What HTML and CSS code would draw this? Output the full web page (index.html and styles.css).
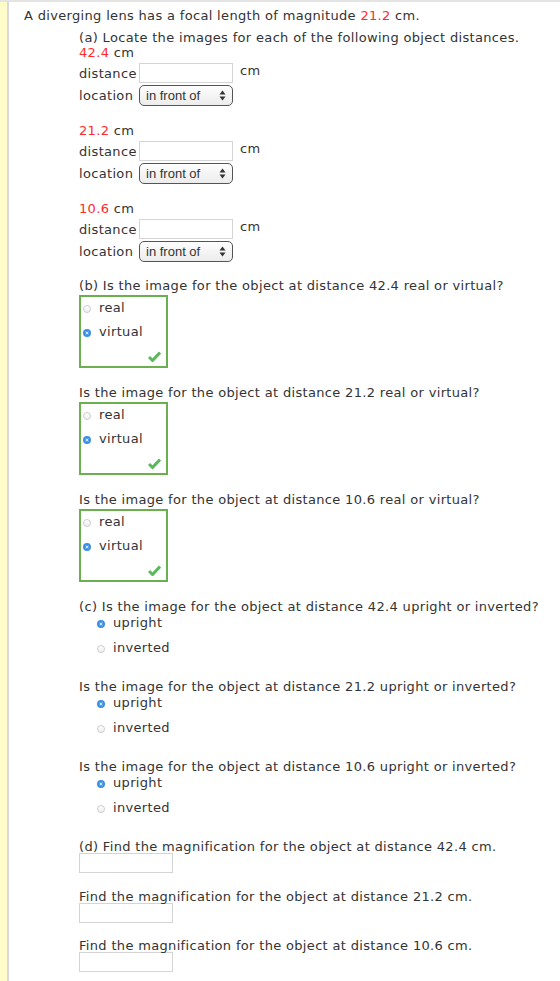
FILE: index.html
```html
<!DOCTYPE html>
<html lang="en">
<head>
  <meta charset="UTF-8">
  <meta name="viewport" content="width=device-width, initial-scale=1.0">
  <title>Diverging Lens</title>
  <link rel="stylesheet" href="styles.css">
</head>
<body>
  <div class="sidebar"></div>
  <div class="page">
    <p class="intro">A diverging lens has a focal length of magnitude <span class="red">21.2</span> cm.</p>

    <div class="part">
      <p class="q">(a) Locate the images for each of the following object distances.</p>

      <div class="obj">
        <p class="obj-label"><span class="red">42.4</span> cm</p>
        <div class="row first"><span class="lbl">distance</span><input class="num" type="text"><span class="unit">cm</span></div>
        <div class="row"><span class="lbl">location</span><span class="select">in front of<svg width="7" height="11" viewBox="0 0 7 11"><path d="M3.5 0.5 L6.5 4.5 H0.5 Z M3.5 10.5 L6.5 6.5 H0.5 Z" fill="#333"/></svg></span></div>
      </div>

      <div class="obj">
        <p class="obj-label"><span class="red">21.2</span> cm</p>
        <div class="row first"><span class="lbl">distance</span><input class="num" type="text"><span class="unit">cm</span></div>
        <div class="row"><span class="lbl">location</span><span class="select">in front of<svg width="7" height="11" viewBox="0 0 7 11"><path d="M3.5 0.5 L6.5 4.5 H0.5 Z M3.5 10.5 L6.5 6.5 H0.5 Z" fill="#333"/></svg></span></div>
      </div>

      <div class="obj">
        <p class="obj-label"><span class="red">10.6</span> cm</p>
        <div class="row first"><span class="lbl">distance</span><input class="num" type="text"><span class="unit">cm</span></div>
        <div class="row"><span class="lbl">location</span><span class="select">in front of<svg width="7" height="11" viewBox="0 0 7 11"><path d="M3.5 0.5 L6.5 4.5 H0.5 Z M3.5 10.5 L6.5 6.5 H0.5 Z" fill="#333"/></svg></span></div>
      </div>
    </div>

    <div class="part part-b">
      <p class="q">(b) Is the image for the object at distance 42.4 real or virtual?</p>
      <div class="answer">
        <div class="opt"><span class="radio"></span>real</div>
        <div class="opt"><span class="radio on"></span>virtual</div>
        <svg class="check" width="13" height="11" viewBox="0 0 13 11"><path d="M1 6 L4.5 9.5 L12 1.5" fill="none" stroke="#5cb85c" stroke-width="3"/></svg>
      </div>

      <p class="q">Is the image for the object at distance 21.2 real or virtual?</p>
      <div class="answer">
        <div class="opt"><span class="radio"></span>real</div>
        <div class="opt"><span class="radio on"></span>virtual</div>
        <svg class="check" width="13" height="11" viewBox="0 0 13 11"><path d="M1 6 L4.5 9.5 L12 1.5" fill="none" stroke="#5cb85c" stroke-width="3"/></svg>
      </div>

      <p class="q">Is the image for the object at distance 10.6 real or virtual?</p>
      <div class="answer">
        <div class="opt"><span class="radio"></span>real</div>
        <div class="opt"><span class="radio on"></span>virtual</div>
        <svg class="check" width="13" height="11" viewBox="0 0 13 11"><path d="M1 6 L4.5 9.5 L12 1.5" fill="none" stroke="#5cb85c" stroke-width="3"/></svg>
      </div>
    </div>

    <div class="part part-c">
      <div class="group">
        <p class="q">(c) Is the image for the object at distance 42.4 upright or inverted?</p>
        <div class="opt"><span class="radio on"></span>upright</div>
        <div class="opt"><span class="radio"></span>inverted</div>
      </div>
      <div class="group">
        <p class="q">Is the image for the object at distance 21.2 upright or inverted?</p>
        <div class="opt"><span class="radio on"></span>upright</div>
        <div class="opt"><span class="radio"></span>inverted</div>
      </div>
      <div class="group">
        <p class="q">Is the image for the object at distance 10.6 upright or inverted?</p>
        <div class="opt"><span class="radio on"></span>upright</div>
        <div class="opt"><span class="radio"></span>inverted</div>
      </div>
    </div>

    <div class="part part-d">
      <div class="group">
        <p class="q">(d) Find the magnification for the object at distance 42.4 cm.</p>
        <input class="num" type="text">
      </div>
      <div class="group">
        <p class="q">Find the magnification for the object at distance 21.2 cm.</p>
        <input class="num" type="text">
      </div>
      <div class="group">
        <p class="q">Find the magnification for the object at distance 10.6 cm.</p>
        <input class="num" type="text">
      </div>
    </div>
  </div>
</body>
</html>
```

FILE: styles.css
```css
html, body {
  margin: 0;
  padding: 0;
  background: #fff;
}
body {
  font-family: "DejaVu Sans", Verdana, sans-serif;
  font-size: 13px;
  line-height: 15px;
  letter-spacing: 0.33px;
  color: #333;
  display: flex;
  min-height: 981px;
  border-top: 2px solid #e4e4e4;
  box-sizing: border-box;
}
p {
  margin: 0;
}
.sidebar {
  width: 7px;
  flex: none;
  background: #fefcc8;
  border-right: 2px solid #d8d8e0;
}
.page {
  flex: 1;
  padding: 6px 0 0 15px;
}
.red {
  color: #ff2a2a;
}
.intro {
  margin-bottom: 7px;
}
.part {
  padding-left: 55px;
}

/* (a) object distance blocks */
.obj {
  margin-bottom: 17px;
}
.row {
  display: flex;
  align-items: center;
  height: 22px;
}
.row.first {
  margin-top: 2px;
}
.lbl {
  width: 60px;
}
.num {
  width: 94px;
  height: 20px;
  box-sizing: border-box;
  border: 1px solid #d4d4d4;
  padding: 0;
  margin: 0;
  background: #fff;
  font: inherit;
}
.unit {
  margin-left: 7px;
  align-self: flex-start;
  margin-top: 1px;
}
.select {
  width: 94px;
  height: 21px;
  box-sizing: border-box;
  border: 1px solid #555;
  border-radius: 5px;
  background: linear-gradient(#fdfdfd, #ececec);
  font-family: "Liberation Sans", Arial, sans-serif;
  font-size: 13px;
  letter-spacing: 0;
  display: flex;
  align-items: center;
  justify-content: space-between;
  padding: 0 6px 0 6px;
  color: #333;
}

/* (b) graded answer boxes */
.part-b {
  margin-top: -1px;
}
.answer {
  width: 89px;
  height: 73px;
  box-sizing: border-box;
  border: 2px solid #6bb04f;
  margin: 2px 0 17px;
  display: flex;
  flex-direction: column;
  position: relative;
}
.opt {
  display: flex;
  align-items: center;
}
.answer .opt {
  height: 24px;
}
.answer .opt:first-child {
  margin-top: -1px;
  height: 23px;
}
.radio {
  width: 8px;
  height: 8px;
  box-sizing: border-box;
  border-radius: 50%;
  border: 1px solid #ccc;
  background: linear-gradient(#fff, #eee);
  margin: 3px 8px 0 2px;
}
.radio.on {
  border: 2px solid #3d8fe6;
  background: #fff;
  box-shadow: inset 0 0 0 1px #3d8fe6;
}
.check {
  position: absolute;
  right: 5px;
  bottom: 4px;
}

/* (c) upright / inverted */
.part-c .group {
  margin-bottom: 24px;
}
.part-c .opt {
  padding-left: 16px;
  height: 15px;
  margin-top: 10px;
}
.part-c .q + .opt {
  margin-top: 1px;
}
.part-c .group:last-child {
  margin-bottom: 24px;
}

/* (d) magnification */
.part-d .group {
  margin-bottom: 15.5px;
}
.part-d .q {
  margin-bottom: -1px;
}
.part-d .num {
  display: block;
  margin-bottom: 1px;
}
```
